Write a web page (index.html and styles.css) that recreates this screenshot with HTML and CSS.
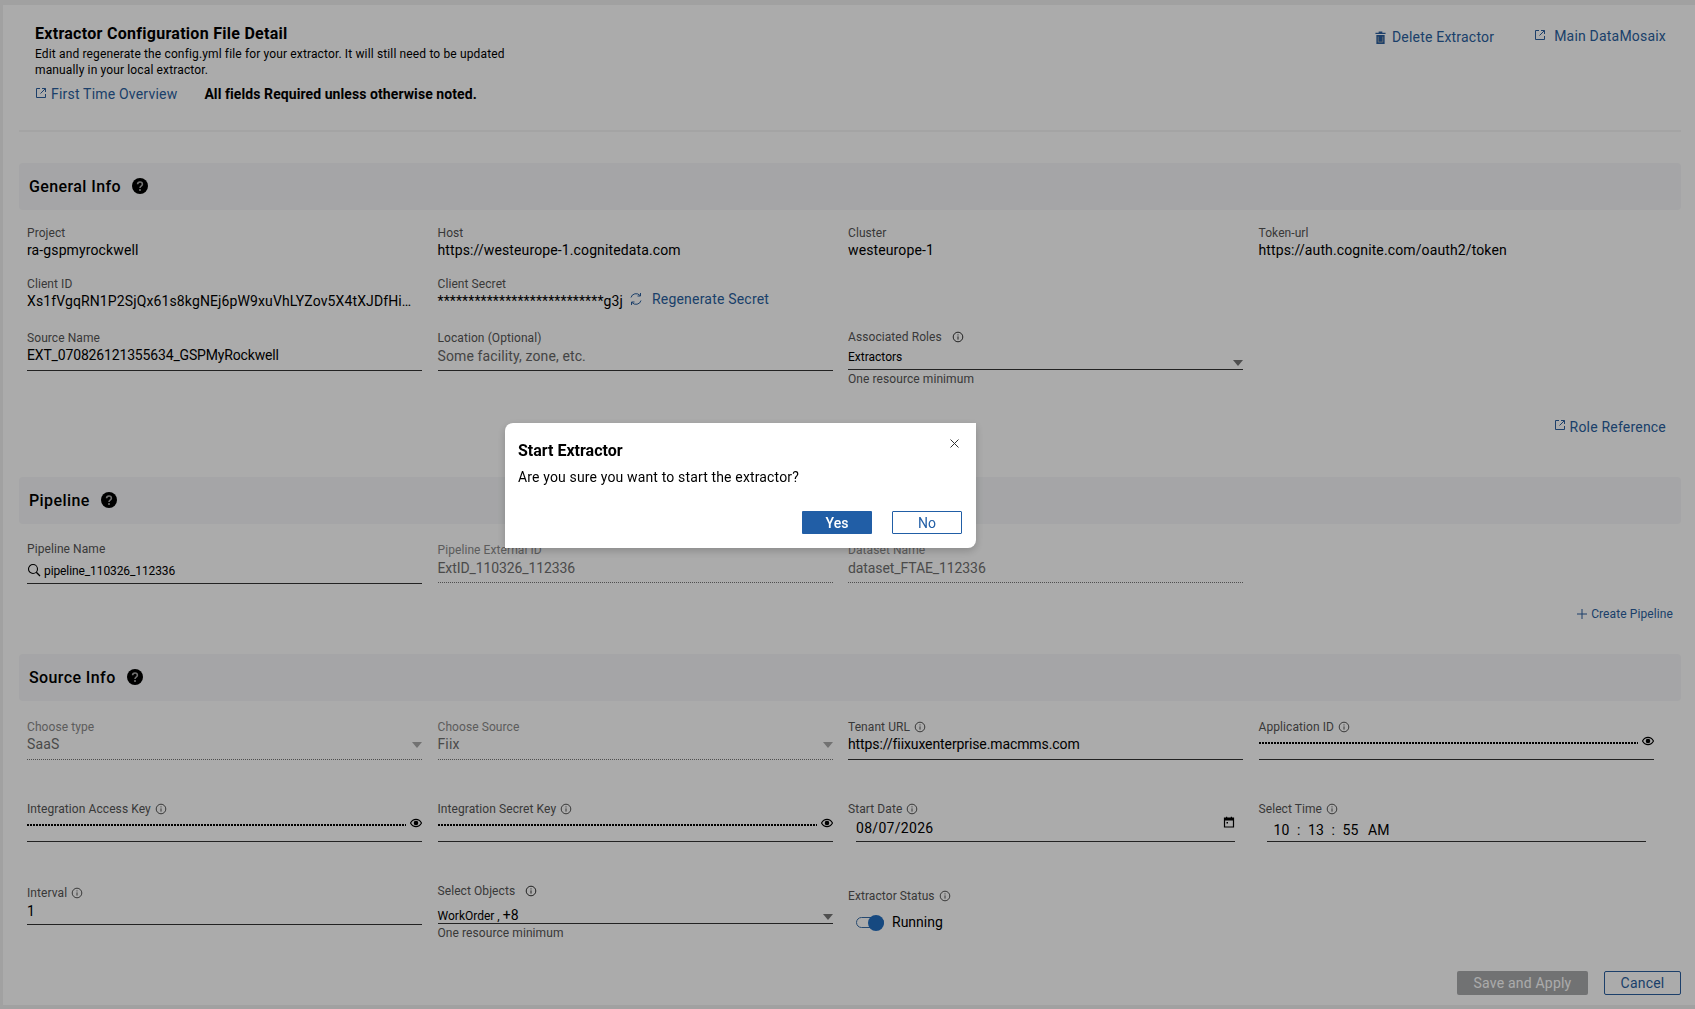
FILE: index.html
```html
<!DOCTYPE html>
<html lang="en">
<head>
  <meta charset="UTF-8">
  <meta name="viewport" content="width=device-width, initial-scale=1.0">
  <title>Extractor Configuration File Detail</title>
  <link rel="stylesheet" href="styles.css">
</head>
<body>
  <svg class="sprites" width="0" height="0">
    <symbol id="i-ext" viewBox="0 0 12 12"><path d="M5 1.500H1.500v9h9V7M7 1.500h3.500V5M10.500 1.500 5.500 6.500" fill="none" stroke="currentColor" stroke-width="1"/></symbol>
    <symbol id="i-help" viewBox="0 0 16 16"><circle cx="8" cy="8" r="8" fill="#000"/><path d="M5.600 6.300C5.600 4.900 6.700 4 8 4s2.400.9 2.400 2.200c0 1.900-2.400 1.900-2.400 3.700" fill="none" stroke="#ababab" stroke-width="1.600"/><circle cx="8" cy="12" r="1" fill="#ababab"/></symbol>
    <symbol id="i-info" viewBox="0 0 12 12"><circle cx="6" cy="6" r="4.800" fill="none" stroke="currentColor" stroke-width="1"/><path d="M6 5.400v3.200M6 3.400v1" stroke="currentColor" stroke-width="1"/></symbol>
    <symbol id="i-eye" viewBox="0 0 12 12"><path d="M.5 6C2 3.300 4 2.400 6 2.400s4 .9 5.500 3.600C10 8.700 8 9.600 6 9.600S2 8.700.5 6z" fill="none" stroke="#000" stroke-width="1.200"/><circle cx="6" cy="6" r="2.300" fill="#000"/></symbol>
  </svg>

  <div class="page">
    <header class="top">
      <div class="intro">
        <h1>Extractor Configuration File Detail</h1>
        <p>Edit and regenerate the config.yml file for your extractor. It will still need to be updated manually in your local extractor.</p>
        <div class="intro-links">
          <a class="link"><svg class="ext"><use href="#i-ext"/></svg>First Time Overview</a>
          <strong>All fields Required unless otherwise noted.</strong>
        </div>
      </div>
      <div class="top-actions">
        <a class="link delete">
          <svg class="trash" viewBox="0 0 12 14"><path d="M4 .5h4v1.300h3.500v1.500H.5V1.800H4zM1.500 4.200h9V14h-9z" fill="currentColor"/><path d="M3.500 6v6h5V6" fill="none" stroke="#ababab" stroke-width=".9"/></svg>Delete Extractor
        </a>
        <a class="link main-link"><svg class="ext"><use href="#i-ext"/></svg>Main DataMosaix</a>
      </div>
    </header>

    <!-- General Info -->
    <section class="band"><h2>General Info</h2><svg class="help"><use href="#i-help"/></svg></section>
    <div class="fields row-project">
      <div class="field"><label>Project</label><div class="value">ra-gspmyrockwell</div></div>
      <div class="field"><label>Host</label><div class="value">https://westeurope-1.cognitedata.com</div></div>
      <div class="field"><label>Cluster</label><div class="value">westeurope-1</div></div>
      <div class="field"><label>Token-url</label><div class="value">https://auth.cognite.com/oauth2/token</div></div>
    </div>
    <div class="fields row-client">
      <div class="field"><label>Client ID</label><div class="value clip">Xs1fVgqRN1P2SjQx61s8kgNEj6pW9xuVhLYZov5X4tXJDfHi…</div></div>
      <div class="field">
        <label>Client Secret</label>
        <div class="value secret">
          <span>***************************g3j</span>
          <a class="link regen">
            <svg class="refresh" viewBox="0 0 14 14"><path d="M2 5.500A5.200 5.200 0 0 1 11 3.500M12 8.500A5.200 5.200 0 0 1 3 10.500" fill="none" stroke="currentColor" stroke-width="1"/><path d="M11.500 1v3H8.500M2.500 13v-3h3" fill="none" stroke="currentColor" stroke-width="1"/></svg>Regenerate Secret
          </a>
        </div>
      </div>
    </div>
    <div class="fields row-source">
      <div class="field"><label>Source Name</label><div class="value line tight">EXT_070826121355634_GSPMyRockwell</div></div>
      <div class="field"><label>Location (Optional)</label><div class="value line muted">Some facility, zone, etc.</div></div>
      <div class="field roles">
        <label>Associated Roles<svg class="info wide"><use href="#i-info"/></svg></label>
        <div class="value line select small">Extractors<i class="caret"></i></div>
        <div class="hint">One resource minimum</div>
      </div>
    </div>
    <div class="link-row role-row"><a class="link"><svg class="ext"><use href="#i-ext"/></svg>Role Reference</a></div>

    <!-- Pipeline -->
    <section class="band"><h2>Pipeline</h2><svg class="help"><use href="#i-help"/></svg></section>
    <div class="fields row-pipeline">
      <div class="field">
        <label>Pipeline Name</label>
        <div class="value line search">
          <svg class="glass" viewBox="0 0 14 14"><circle cx="6" cy="6" r="4.500" fill="none" stroke="#000" stroke-width="1.100"/><path d="M9.300 9.300 13 13" stroke="#000" stroke-width="1.300"/></svg>pipeline_110326_112336
        </div>
      </div>
      <div class="field locked"><label>Pipeline External ID</label><div class="value dotted">ExtID_110326_112336</div></div>
      <div class="field locked"><label>Dataset Name</label><div class="value dotted">dataset_FTAE_112336</div></div>
    </div>
    <div class="link-row create-row">
      <a class="link create"><svg class="plus" viewBox="0 0 10 10"><path d="M5 0v10M0 5h10" stroke="currentColor" stroke-width="1"/></svg>Create Pipeline</a>
    </div>

    <!-- Source Info -->
    <section class="band"><h2>Source Info</h2><svg class="help"><use href="#i-help"/></svg></section>
    <div class="fields row-type">
      <div class="field disabled"><label>Choose type</label><div class="value dotted select">SaaS<i class="caret mid"></i></div></div>
      <div class="field disabled"><label>Choose Source</label><div class="value dotted select">Fiix<i class="caret mid"></i></div></div>
      <div class="field"><label>Tenant URL<svg class="info"><use href="#i-info"/></svg></label><div class="value line tenant">https://fiixuxenterprise.macmms.com</div></div>
      <div class="field"><label>Application ID<svg class="info"><use href="#i-info"/></svg></label><div class="value line pass"><span class="dots"></span><svg class="eye"><use href="#i-eye"/></svg></div></div>
    </div>
    <div class="fields row-keys">
      <div class="field"><label>Integration Access Key<svg class="info"><use href="#i-info"/></svg></label><div class="value line pass"><span class="dots"></span><svg class="eye"><use href="#i-eye"/></svg></div></div>
      <div class="field"><label>Integration Secret Key<svg class="info"><use href="#i-info"/></svg></label><div class="value line pass"><span class="dots"></span><svg class="eye"><use href="#i-eye"/></svg></div></div>
      <div class="field"><label>Start Date<svg class="info"><use href="#i-info"/></svg></label>
        <div class="value line date">08/07/2026
          <svg class="cal" viewBox="0 0 12 12"><path d="M1.500 2h9v9h-9z" fill="none" stroke="#000" stroke-width="1.200"/><path d="M1.500 2h9v2.500h-9zM3 .8h1.200V2H3zM7.800 .8H9V2H7.800z" fill="#000"/><path d="M3.500 6h1.500v1.500H3.500z" fill="#000"/></svg>
        </div>
      </div>
      <div class="field"><label>Select Time<svg class="info"><use href="#i-info"/></svg></label><div class="value line time"><span>10</span><span>:</span><span>13</span><span>:</span><span>55</span><span class="ampm">AM</span></div></div>
    </div>
    <div class="fields row-last">
      <div class="field"><label>Interval<svg class="info"><use href="#i-info"/></svg></label><div class="value line interval">1</div></div>
      <div class="field objects">
        <label>Select Objects<svg class="info wide"><use href="#i-info"/></svg></label>
        <div class="value line select small">WorkOrder ,&nbsp;<span class="more">+8</span><i class="caret"></i></div>
        <div class="hint">One resource minimum</div>
      </div>
      <div class="field status">
        <label>Extractor Status<svg class="info"><use href="#i-info"/></svg></label>
        <div class="toggle-row"><span class="toggle"><span class="knob"></span></span>Running</div>
      </div>
    </div>
    <footer class="actions">
      <button class="btn save">Save and Apply</button>
      <button class="btn cancel">Cancel</button>
    </footer>
  </div>

  <!-- Confirm dialog -->
  <div class="overlay">
    <div class="modal">
      <svg class="close" viewBox="0 0 9 9"><path d="M.5.5l8 8M8.500.5l-8 8" stroke="#333" stroke-width="1"/></svg>
      <h3>Start Extractor</h3>
      <p>Are you sure you want to start the extractor?</p>
      <div class="modal-actions">
        <button class="modal-btn yes">Yes</button>
        <button class="modal-btn no">No</button>
      </div>
    </div>
  </div>
</body>
</html>
```

FILE: styles.css
```css
* {
  box-sizing: border-box;
}

body {
  margin: 0;
  height: 1009px;
  padding: 5px 0 4px 3px;
  overflow: hidden;
  background: #f0f0f0;
  font-family: Roboto, 'Liberation Sans', sans-serif;
  font-size: 14px;
  color: #000;
}

.sprites {
  position: absolute;
}

.page {
  height: 100%;
  padding: 0 14px 0 16px;
  background: #fff;
}

/* Header */
.top {
  display: flex;
  justify-content: space-between;
  height: 127px;
  padding: 20px 0 0 16px;
  border-bottom: 2px solid #f5f5f5;
}

.intro {
  width: 480px;
}

h1 {
  margin: 0;
  font-size: 16px;
  line-height: 18px;
  font-weight: 700;
  letter-spacing: .28px;
}

.intro p {
  margin: 3px 0 0;
  font-size: 12px;
  line-height: 16px;
  letter-spacing: .14px;
}

.intro-links {
  display: flex;
  align-items: center;
  gap: 27px;
  margin-top: 8px;
}

.intro-links strong {
  font-size: 14px;
  letter-spacing: .08px;
}

.link {
  color: #2a5f9e;
  display: inline-flex;
  align-items: center;
  font-size: 14px;
  letter-spacing: .2px;
}

.ext {
  width: 12px;
  height: 12px;
  margin-right: 4px;
  margin-top: -3px;
}

.top-actions {
  display: flex;
  align-items: flex-start;
  gap: 40px;
  padding: 3px 15px 0 0;
}

.main-link .ext {
  margin-right: 8px;
}

.delete {
  margin-top: 1px;
}

.trash {
  width: 11px;
  height: 13px;
  margin-right: 6px;
}

/* Section bands */
.band {
  display: flex;
  align-items: center;
  gap: 11px;
  height: 47px;
  margin-top: 32px;
  padding: 0 10px;
  background: #f6f7f9;
  border-radius: 4px;
}

.top + .band {
  margin-top: 31px;
}

h2 {
  margin: 0;
  font-size: 16px;
  font-weight: 500;
  letter-spacing: .4px;
}

.help {
  width: 16px;
  height: 16px;
  margin-top: -2px;
}

/* Form grid */
.fields {
  display: grid;
  grid-template-columns: repeat(4, 395px);
  column-gap: 15.5px;
  padding-left: 8px;
}

.field label {
  display: block;
  font-size: 12px;
  line-height: 14px;
  letter-spacing: .08px;
  color: #555;
}

.value {
  font-size: 14px;
  line-height: 18px;
  margin-top: 1px;
  letter-spacing: .12px;
}

.line {
  height: 25px;
  border-bottom: 1px solid #333;
}

.dotted {
  height: 25px;
  border-bottom: 1px dotted #777;
}

.tight {
  letter-spacing: -.16px;
}

.tenant {
  letter-spacing: -.1px;
}

.muted {
  padding-top: 1px;
  color: #666;
}

.clip {
  white-space: nowrap;
  overflow: hidden;
  padding-right: 10px;
}

.row-project {
  margin-top: 16px;
}

.row-client {
  margin-top: 18px;
}

.row-source {
  margin-top: 21px;
}

.secret {
  display: flex;
  align-items: center;
}

.regen {
  margin-left: 6px;
  margin-top: -4px;
}

.refresh {
  width: 14px;
  height: 14px;
  margin-right: 9px;
}

.select {
  position: relative;
}

.small {
  font-size: 12px;
  padding-top: 3px;
  letter-spacing: 0;
}

.more {
  font-size: 14px;
}

.caret {
  position: absolute;
  right: 0;
  bottom: 3px;
  border-left: 5px solid transparent;
  border-right: 5px solid transparent;
  border-top: 6px solid #777;
}

.caret.mid {
  bottom: 11px;
  border-top-color: #aaa;
}

.hint {
  font-size: 12px;
  line-height: 14px;
  margin-top: 2px;
  letter-spacing: .08px;
  color: #555;
}

.info {
  width: 12px;
  height: 12px;
  margin-left: 4px;
  vertical-align: -2px;
  color: #555;
}

.info.wide {
  margin-left: 10px;
  color: #333;
}

.roles {
  margin-top: -1px;
}

.link-row {
  display: flex;
  justify-content: flex-end;
}

.role-row {
  margin-top: 32px;
  margin-bottom: 42px;
  height: 17px;
  padding-right: 15px;
}

.role-row + .band {
  margin-top: 0;
}

.create-row {
  margin-top: 22px;
  height: 16px;
  padding-right: 8px;
}

.create {
  font-size: 12px;
  letter-spacing: .1px;
}

.plus {
  width: 10px;
  height: 10px;
  margin-right: 4px;
}

.row-pipeline {
  margin-top: 18px;
}

.search {
  display: flex;
  align-items: flex-start;
  font-size: 12px;
  letter-spacing: -.1px;
  margin-top: 6px;
  height: 22px;
}

.glass {
  width: 14px;
  height: 14px;
  margin-right: 3px;
  margin-top: 1px;
}

.locked label,
.disabled label {
  color: #8a8a8a;
}

.locked .value,
.disabled .value {
  color: #6f6f6f;
}

.locked {
  padding-top: 1px;
}

.locked .value {
  height: 25px;
  letter-spacing: -.1px;
  padding-top: 1px;
}

.row-type {
  margin-top: 19px;
}

.row-keys {
  margin-top: 42px;
}

.row-last {
  margin-top: 44px;
}

.interval {
  margin-top: 2px;
  height: 23px;
}

.pass {
  display: flex;
  align-items: flex-start;
  width: 100%;
}

.dots {
  display: block;
  flex: 1;
  height: 2px;
  margin-top: 7px;
  margin-right: 4px;
  background: repeating-linear-gradient(90deg, #000 0 2px, transparent 2px 3px);
}

.eye {
  width: 12px;
  height: 12px;
}

.date {
  position: relative;
  margin-left: 8px;
  margin-right: 8px;
  padding-top: 2px;
  letter-spacing: .3px;
}

.cal {
  position: absolute;
  right: 0;
  top: -1px;
  width: 12px;
  height: 12px;
}

.time {
  display: flex;
  gap: 7.5px;
  margin-left: 8px;
  margin-right: 8px;
  padding: 4px 0 0 7px;
}

.ampm {
  margin-left: 2px;
}

.objects {
  margin-top: -2px;
}

.objects .value {
  margin-top: 6px;
  height: 20px;
  padding-top: 2px;
}

.status {
  padding-top: 3px;
}

.toggle-row {
  display: flex;
  align-items: center;
  gap: 8px;
  margin: 11px 0 0 8px;
}

.toggle {
  display: block;
  position: relative;
  width: 28px;
  height: 11px;
  border: 1px solid #3a6ea8;
  border-radius: 6px;
}

.knob {
  position: absolute;
  right: -1px;
  top: -3px;
  width: 16px;
  height: 16px;
  border-radius: 50%;
  background: #226ebf;
}

/* Footer */
.actions {
  display: flex;
  justify-content: flex-end;
  gap: 16px;
  margin-top: 31px;
}

.btn {
  height: 24px;
  padding: 0;
  font-family: inherit;
  font-size: 14px;
  letter-spacing: .2px;
  border-radius: 2px;
}

.save {
  width: 131px;
  border: none;
  background: #a9aaac;
  color: #fff;
}

.cancel {
  width: 77px;
  border: 1px solid #2a5f9e;
  background: #fff;
  color: #2a5f9e;
}

/* Modal */
.overlay {
  position: fixed;
  inset: 0;
  background: rgba(0, 0, 0, 0.33);
}

.modal {
  position: absolute;
  left: 505px;
  top: 423px;
  width: 471px;
  height: 125px;
  padding: 18px 14px 0 13px;
  background: #fff;
  border-radius: 8px 0 8px 0;
  box-shadow: 0 3px 8px rgba(0, 0, 0, 0.2);
}

.close {
  position: absolute;
  right: 17px;
  top: 16px;
  width: 9px;
  height: 9px;
}

h3 {
  margin: 0;
  font-size: 16px;
  line-height: 20px;
  font-weight: 700;
}

.modal p {
  margin: 7px 0 0;
  font-size: 14px;
  line-height: 18px;
  letter-spacing: .15px;
}

.modal-actions {
  display: flex;
  justify-content: flex-end;
  gap: 20px;
  margin-top: 25px;
}

.modal-btn {
  width: 70px;
  height: 23px;
  padding: 0;
  font-family: inherit;
  font-size: 14px;
  border-radius: 1px;
}

.yes {
  border: none;
  background: #215ea6;
  color: #fff;
  font-weight: 500;
}

.no {
  border: 1px solid #215ea6;
  background: #fff;
  color: #215ea6;
}
```
